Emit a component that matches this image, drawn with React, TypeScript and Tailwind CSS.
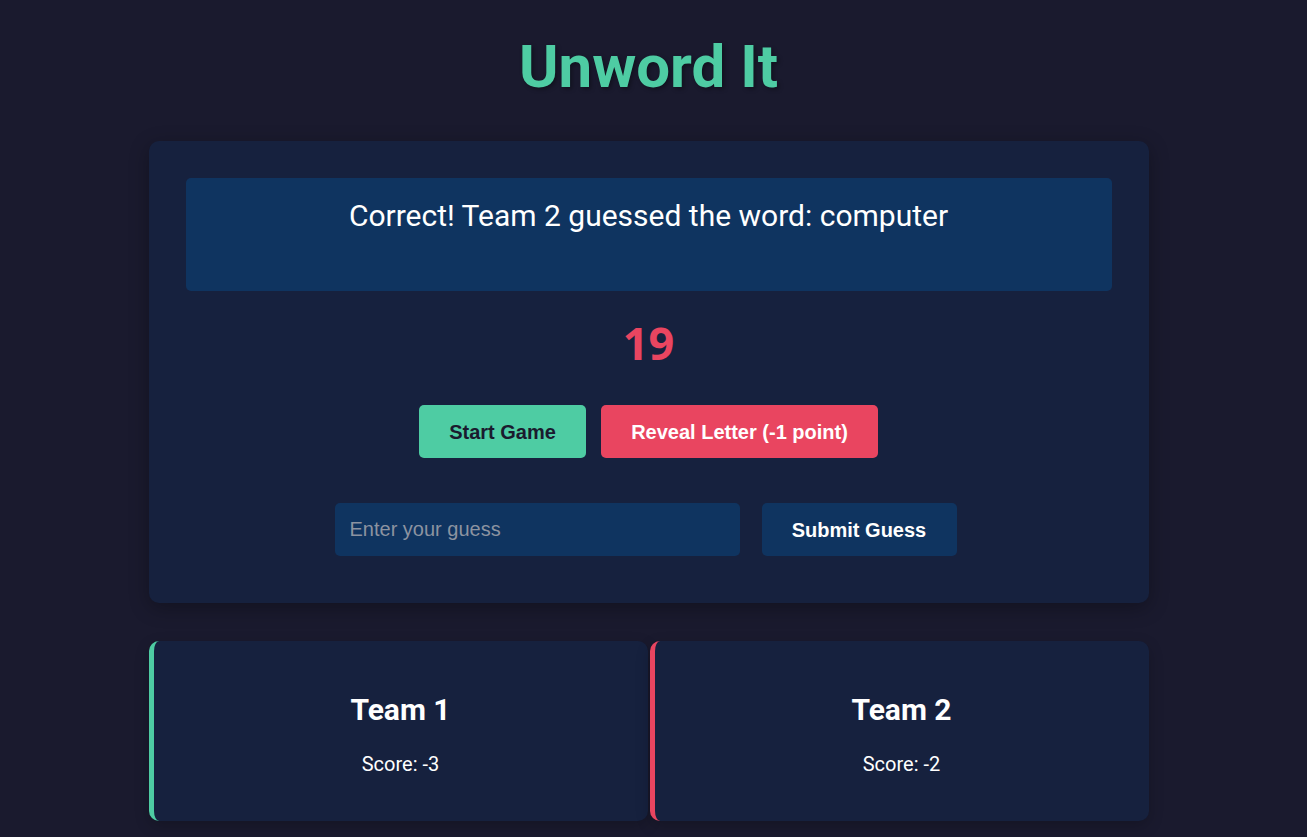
export default function App() {
  return (
    <div className="min-h-screen bg-[#1a1a2e] text-white" style={{ fontFamily: 'Roboto, "Liberation Sans", sans-serif' }}>
      <div className="w-[1297px] pt-[32px] pb-[17px] flex flex-col items-center">
        <h1
          className="text-[60px] leading-[70px] font-bold text-[#4ecca3] [text-shadow:2px_2px_4px_rgba(0,0,0,0.35)]"
          style={{ fontFamily: 'Roboto, sans-serif' }}
        >
          Unword It
        </h1>

        <div className="mt-[39px] w-[1000px] rounded-[10px] bg-[#16213e] p-[37px] pb-[47px] shadow-[0_5px_20px_rgba(0,0,0,0.3)] flex flex-col items-center">
          <div className="w-full h-[113px] rounded-[5px] bg-[#0f3460] pt-[20px] text-center text-[30px] leading-[36px] text-white">
            Correct! Team 2 guessed the word: computer
          </div>

          <div
            className="mt-[22px] h-[60px] leading-[60px] text-[45px] font-bold text-[#e94560]"
            style={{ fontFamily: '"Open Sans", sans-serif' }}
          >
            19
          </div>

          <div className="mt-[32px] flex gap-[15px]" style={{ fontFamily: '"Liberation Sans", Arial, sans-serif' }}>
            <button className="h-[53px] w-[167px] rounded-[5px] bg-[#4ecca3] text-[20px] font-bold text-[#1a1a2e]">
              Start Game
            </button>
            <button className="h-[53px] w-[277px] rounded-[5px] bg-[#e94560] text-[20px] font-bold text-white">
              Reveal Letter (-1 point)
            </button>
          </div>

          <div className="mt-[45px] flex gap-[22px] -translate-x-[3px]" style={{ fontFamily: '"Liberation Sans", Arial, sans-serif' }}>
            <input
              placeholder="Enter your guess"
              className="h-[53px] w-[405px] rounded-[5px] bg-[#0f3460] px-[15px] text-[20px] text-white placeholder:text-[#8c93a0] outline-none"
            />
            <button className="h-[53px] w-[195px] rounded-[5px] bg-[#0f3460] text-[20px] font-bold text-white">
              Submit Guess
            </button>
          </div>
        </div>

        <div className="mt-[38px] w-[1000px] grid grid-cols-2 gap-[2px]">
          <div className="rounded-[10px] border-l-[5px] border-[#4ecca3] bg-[#16213e] pt-[50px] pb-[45px] text-center shadow-[0_5px_15px_rgba(0,0,0,0.2)]">
            <h2 className="text-[30px] leading-[38px] font-bold">Team 1</h2>
            <p className="mt-[23px] text-[20px] leading-[24px]">Score: -3</p>
          </div>
          <div className="rounded-[10px] border-l-[5px] border-[#e94560] bg-[#16213e] pt-[50px] pb-[45px] text-center shadow-[0_5px_15px_rgba(0,0,0,0.2)]">
            <h2 className="text-[30px] leading-[38px] font-bold">Team 2</h2>
            <p className="mt-[23px] text-[20px] leading-[24px]">Score: -2</p>
          </div>
        </div>
      </div>
    </div>
  );
}
